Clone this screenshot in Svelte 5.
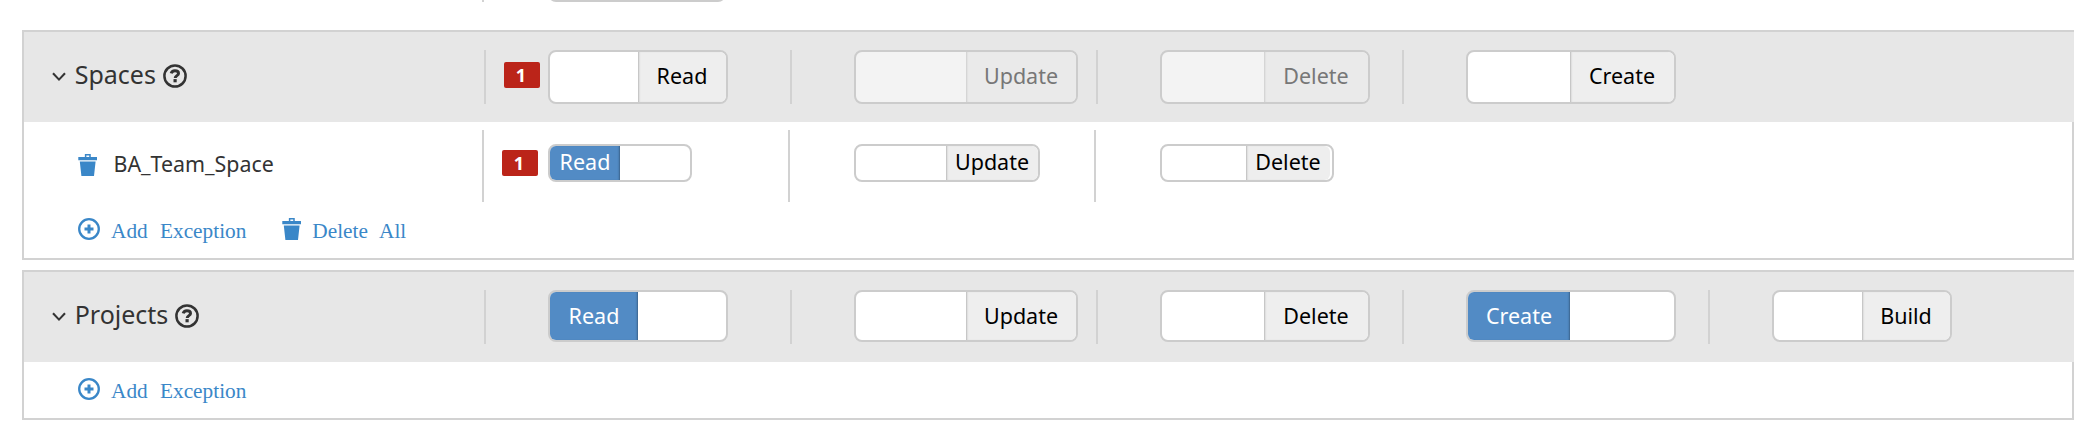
<script>
  const panels = [
    {
      title: 'Spaces',
      titleWidth: 80,
      height: 54,
      toggles: [
        { label: 'Read', width: 180, split: 88, badge: 1 },
        { label: 'Update', width: 224, split: 110, disabled: true },
        { label: 'Delete', width: 210, split: 102, disabled: true },
        { label: 'Create', width: 210, split: 102 }
      ],
      rows: [
        {
          name: 'BA_Team_Space',
          toggles: [
            { label: 'Read', width: 144, split: 70, on: true, badge: 1 },
            { label: 'Update', width: 186, split: 90 },
            { label: 'Delete', width: 174, split: 84, inset: 2 }
          ]
        }
      ]
    },
    {
      title: 'Projects',
      titleWidth: 92,
      height: 52,
      toggles: [
        { label: 'Read', width: 180, split: 88, on: true },
        { label: 'Update', width: 224, split: 110 },
        { label: 'Delete', width: 210, split: 102 },
        { label: 'Create', width: 210, split: 102, on: true },
        { label: 'Build', width: 180, split: 88 }
      ],
      rows: []
    }
  ];
</script>

{#snippet trash()}
  <svg class="trash" width="20" height="22" viewBox="0 0 20 22">
    <path d="M7.6 3.4V.8h4.4v2.6" fill="none" stroke="currentColor" stroke-width="1.5" />
    <path d="M.3 3H19v3.2H.3zM1.8 7.4h15.8L16 22H3.4z" fill="currentColor" />
  </svg>
{/snippet}

{#snippet cell(t, small, height)}
  <div class="cell">
    <div class="slot">
      {#if t.badge}<span class="badge">{t.badge}</span>{/if}
    </div>
    <div class="toggle" class:small class:on={t.on} class:disabled={t.disabled} style:width="{t.width}px" style:height="{height}px">
      {#if t.on}
        <span class="label first" style:width="{t.split}px">{t.label}</span>
      {:else}
        <span class="knob" style:width="{t.split}px"></span>
        <span class="label last" style:margin-right="{t.inset ?? 0}px">{t.label}</span>
      {/if}
    </div>
  </div>
{/snippet}

<main>
  <div class="previous"><div class="edge"></div></div>
  {#each panels as p}
    <section>
      <header>
        <div class="title">
          <svg class="chevron" width="14" height="10" viewBox="0 0 14 10">
            <path d="M1 1.3 7 7.6l6-6.3" fill="none" stroke="currentColor" stroke-width="2.1" />
          </svg>
          <h2 style:width="{p.titleWidth}px">{p.title}</h2>
          <svg class="help" width="24" height="24" viewBox="0 0 24 24">
            <circle cx="12" cy="12" r="10.6" fill="none" stroke="currentColor" stroke-width="2.5" />
            <path d="M8.2 9.4c.5-2 1.9-2.7 3.7-2.7 2.1 0 3.6 1 3.6 2.7 0 2.3-3.3 2.2-3.3 4.7" fill="none" stroke="currentColor" stroke-width="3" />
            <path d="M10.5 15.1h3.2v3.2h-3.2z" fill="currentColor" />
          </svg>
        </div>
        {#each p.toggles as t}{@render cell(t, false, p.height)}{/each}
      </header>
      {#each p.rows as r}
        <div class="row">
          <div class="name">{@render trash()}<span>{r.name}</span></div>
          {#each r.toggles as t}{@render cell(t, true, 38)}{/each}
        </div>
      {/each}
      <div class="links">
        <a>
          <svg width="22" height="22" viewBox="0 0 22 22">
            <circle cx="11" cy="11" r="9.8" fill="none" stroke="currentColor" stroke-width="2.3" />
            <path d="M11 6.5v9M6.5 11h9" stroke="currentColor" stroke-width="3" />
          </svg>
          <span class="add">Add Exception</span>
        </a>
        {#if p.rows.length}
          <a>{@render trash()}<span class="del">Delete All</span></a>
        {/if}
      </div>
    </section>
  {/each}
</main>

<style>
  :global(body) { background: #fff; }
  main {
    box-sizing: border-box;
    width: 2090px;
    height: 446px;
    padding: 0 16px 0 22px;
    overflow: hidden;
    font-family: 'Noto Sans', 'Open Sans', sans-serif;
    color: #333;
  }
  .previous {
    display: flex;
    align-items: flex-end;
    box-sizing: border-box;
    height: 2px;
    margin: 0 0 28px 460px;
    padding-left: 64px;
    border-left: 2px solid #d2d2d2;
    overflow: hidden;
  }
  .edge {
    flex: none;
    box-sizing: border-box;
    width: 178px;
    height: 38px;
    border: 2px solid #ccc;
    border-radius: 8px;
  }
  section {
    box-sizing: border-box;
    border: 2px solid #d2d2d2;
    margin-bottom: 10px;
  }
  header {
    display: grid;
    grid-template-columns: 460px repeat(5, 306px);
    height: 54px;
    margin-right: -2px;
    padding: 18px 0;
    background: #e7e7e7;
  }
  .title { display: flex; align-items: flex-start; padding-left: 28px; }
  .chevron { margin-top: 22px; flex: none; }
  h2 {
    margin: 7px 8px 0 8.7px;
    font-size: 25px;
    line-height: 34px;
    font-weight: 400;
    white-space: nowrap;
  }
  .help { margin-top: 14px; flex: none; }
  .cell {
    display: flex;
    align-items: flex-start;
    border-left: 2px solid #d2d2d2;
  }
  .slot { display: flex; width: 62px; flex: none; }
  .badge {
    width: 36px;
    height: 26px;
    margin: 12px 0 0 18px;
    border-radius: 2px;
    background: #bb2419;
    color: #fff;
    font-family: 'Open Sans', sans-serif;
    font-size: 18px;
    font-weight: 700;
    line-height: 26px;
    text-align: center;
    text-indent: -2px;
  }
  .toggle {
    display: flex;
    box-sizing: border-box;
    flex: none;
    border: 2px solid #ccc;
    border-radius: 8px;
    overflow: hidden;
    background: #fff;
    font-size: 21.5px;
  }
  .knob { flex: none; }
  .label {
    background: #eee;
    color: #000;
    line-height: 48px;
    text-align: center;
    white-space: nowrap;
    box-shadow: inset 2px 0 2px -1px rgba(0, 0, 0, 0.22);
  }
  .first { flex: none; }
  .last { flex: 1 1 0; min-width: 0; }
  .on .label {
    background: #528bc5;
    color: #fff;
    box-shadow: inset -2px 0 2px -1px rgba(0, 0, 0, 0.3);
  }
  .disabled { background: #f3f3f3; }
  .disabled .label { background: #eaeaea; color: #777; box-shadow: inset 2px 0 2px -1px rgba(0, 0, 0, 0.12); }
  .row {
    display: grid;
    grid-template-columns: 458px repeat(3, 306px);
    height: 72px;
    padding-top: 8px;
  }
  .row .slot { width: 64px; }
  .row .badge { margin-top: 20px; }
  .row .toggle { margin-top: 14px; }
  .small .label { line-height: 32px; }
  .small .last { border-radius: 0 6px 6px 0; }
  .name { display: flex; align-items: flex-start; padding-left: 54px; font-size: 21.4px; }
  .name .trash { margin-top: 24px; color: #3a87c8; }
  .name span { margin: 18.5px 0 0 15.5px; line-height: 30px; }
  svg { display: block; flex: none; }
  .links {
    display: flex;
    gap: 36px;
    height: 56px;
    padding-left: 54px;
    box-sizing: border-box;
    color: #3a87c8;
    font: 21.3px/26px 'Liberation Serif', 'Times New Roman', serif;
  }
  .links a { display: flex; }
  .links svg { margin-top: 16px; }
  .links span { margin-top: 16px; word-spacing: 7px; white-space: nowrap; }
  .add { margin-left: 11px; }
  .del { margin-left: 10px; }
</style>
